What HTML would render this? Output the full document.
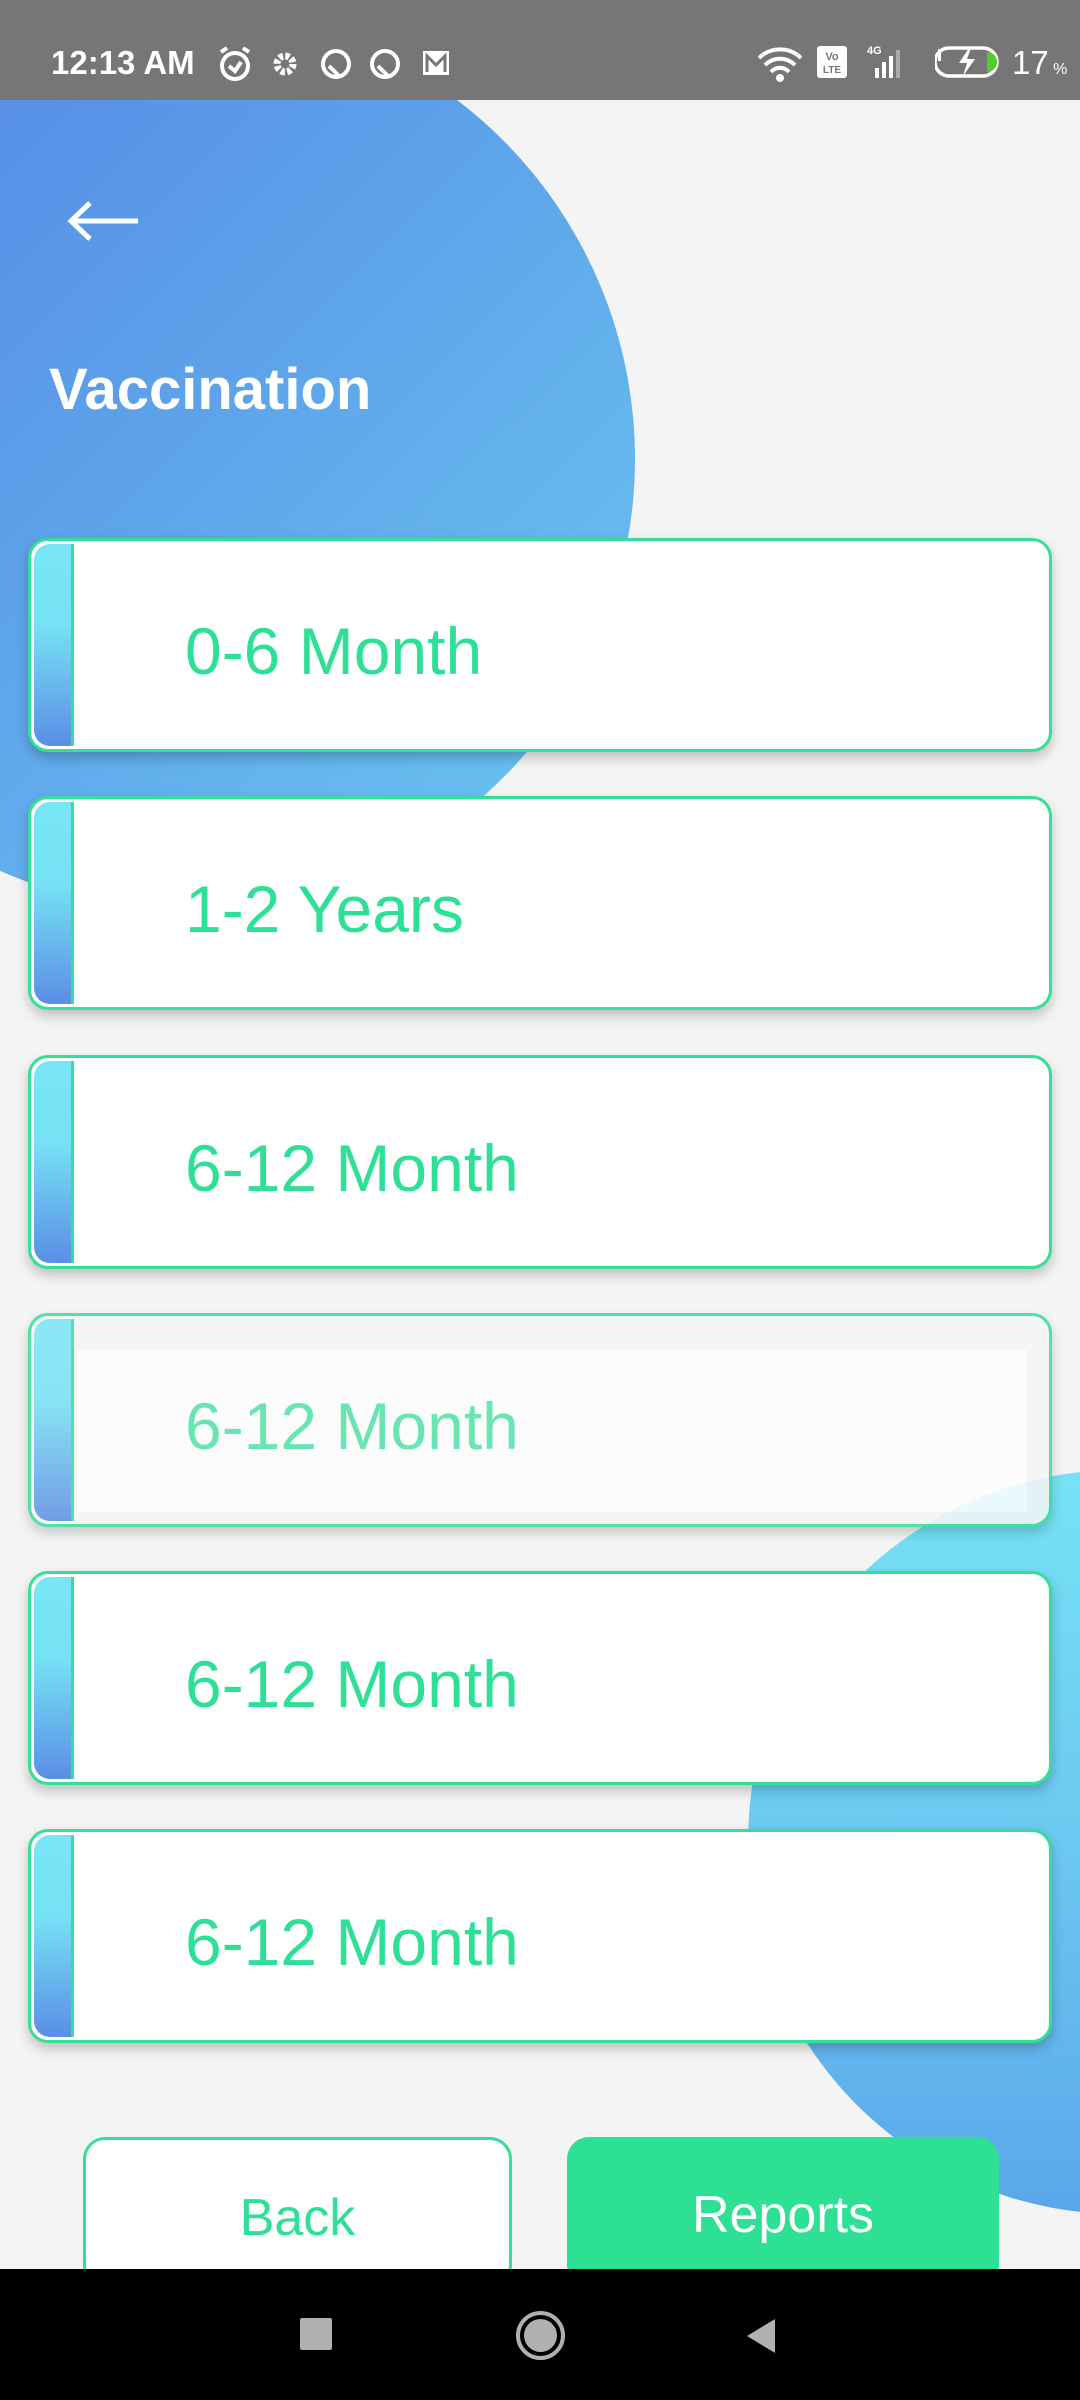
<!DOCTYPE html>
<html><head><meta charset="utf-8"><style>
*{margin:0;padding:0;box-sizing:border-box}
body{width:1080px;height:2400px;position:relative;overflow:hidden;background:#f4f4f4;font-family:"Liberation Sans",sans-serif}
.sb{position:absolute;left:0;top:0;width:1080px;height:100px;background:#767676;z-index:5;color:#fff}
.c1{position:absolute;left:-267px;top:8px;width:902px;height:902px;border-radius:50%;background:linear-gradient(135deg,#5282e4 0%,#5ea4ea 50%,#6cc8f1 100%)}
.c2{position:absolute;left:748px;top:1470px;width:744px;height:744px;border-radius:50%;background:linear-gradient(180deg,#76e3f5 0%,#6cc8f1 50%,#5aa6ea 100%)}
.card{position:absolute;left:28px;width:1024px;height:214px;border:3px solid #34df98;border-radius:20px;background:#fff;box-shadow:0 6px 12px rgba(0,0,0,.22);overflow:hidden}
.card .st{position:absolute;left:3px;top:3px;bottom:3px;width:40px;border-radius:16px 0 0 16px;background:linear-gradient(180deg,#78e6f6 0%,#76e2f5 40%,#5a8ee6 100%);border-right:3px solid #34df98}
.card .t{position:absolute;left:154px;top:6px;height:208px;line-height:208px;font-size:66px;color:#2ee096}
.ghost{opacity:.85;background:#f6f6f6}
.ghost .in{position:absolute;left:46px;top:34px;right:22px;bottom:12px;background:#fefefe}
.btn{position:absolute;top:2137px;height:150px;border-radius:22px;text-align:center;line-height:156px;font-size:52px}
.nav{position:absolute;left:0;top:2269px;width:1080px;height:131px;background:#000}
</style></head><body>
<div class="c1"></div>
<div class="c2"></div>
<div class="sb">
<div style="position:absolute;left:51px;top:44px;font-size:33px;font-weight:bold">12:13 AM</div>
<svg style="position:absolute;left:215px;top:44px" width="240" height="40" viewBox="0 0 240 40" fill="none" stroke="#fff" stroke-width="4">
<circle cx="20" cy="22" r="13"/><path d="M14 22l6 5 6-9M6 8l6-4M34 8l-6-4"/>
<circle cx="70" cy="20" r="8" stroke-width="7" stroke-dasharray="4 2.3"/>
<circle cx="121" cy="20" r="13"/><path d="M114 22l10 10"/>
<circle cx="170" cy="20" r="13"/><path d="M163 22l10 10"/>
<rect x="208" y="7" width="26" height="24" fill="#fff" stroke="none"/><path d="M212 28V12l9 9 9-9v16" stroke="#767676" stroke-width="3"/>
</svg>
<svg style="position:absolute;left:755px;top:40px" width="220" height="44" viewBox="0 0 220 44">
<path d="M4 18a30 30 0 0 1 42 0M10 25a21 21 0 0 1 30 0M16 32a12 12 0 0 1 18 0" stroke="#fff" stroke-width="4" fill="none"/><circle cx="25" cy="38" r="4" fill="#fff"/>
<rect x="62" y="6" width="30" height="32" rx="3" fill="#fff"/><text x="77" y="20" font-size="11" text-anchor="middle" fill="#767676" font-weight="bold">Vo</text><text x="77" y="33" font-size="10" text-anchor="middle" fill="#767676" font-weight="bold">LTE</text>
<text x="112" y="14" font-size="11" fill="#fff" font-weight="bold">4G</text>
<rect x="120" y="28" width="4" height="10" fill="#fff"/><rect x="127" y="22" width="4" height="16" fill="#fff"/><rect x="134" y="16" width="4" height="22" fill="#fff"/><rect x="141" y="10" width="4" height="28" fill="#aaa"/>
<rect x="183" y="9" width="3" height="12" fill="#fff"/>
</svg>
<svg style="position:absolute;left:935px;top:44px" width="70" height="36" viewBox="0 0 70 36"><path d="M14 4h34a12 12 0 0 1 0 28H14A12 12 0 0 1 14 4z" stroke="#fff" stroke-width="3.5" fill="none"/><path d="M52 8a10 10 0 0 1 0 20z" fill="#4ccf2a"/><path d="M34 4l-10 15h8l-4 13 12-17h-8l4-11z" fill="#fff"/></svg>
<div style="position:absolute;left:1012px;top:44px;font-size:33px">17<span style="font-size:16px"> %</span></div>
</div>
<svg style="position:absolute;left:66px;top:200px" width="74" height="42" viewBox="0 0 74 42"><path d="M72 21H6M24 3L5 21l19 18" stroke="#fff" stroke-width="5" fill="none"/></svg>
<div style="position:absolute;left:49px;top:356px;font-size:58px;font-weight:bold;color:#fff">Vaccination</div>

<div class="card" style="top:538px"><div class="st"></div><div class="t">0-6 Month</div></div>
<div class="card" style="top:796px"><div class="st"></div><div class="t">1-2 Years</div></div>
<div class="card" style="top:1055px"><div class="st"></div><div class="t">6-12 Month</div></div>
<div class="card ghost" style="top:1313px"><div class="in"></div><div class="st"></div><div class="t" style="color:#50e3a6">6-12 Month</div></div>
<div class="card" style="top:1571px"><div class="st"></div><div class="t">6-12 Month</div></div>
<div class="card" style="top:1829px"><div class="st"></div><div class="t">6-12 Month</div></div>

<div class="btn" style="left:83px;width:429px;background:#fff;border:3px solid #34df98;color:#2ee096">Back</div>
<div class="btn" style="left:567px;width:432px;background:#2ee094;color:#fff">Reports</div>
<div class="nav">
<div style="position:absolute;left:300px;top:49px;width:32px;height:32px;background:#b0b0b0;border-radius:2px"></div>
<div style="position:absolute;left:516px;top:42px;width:49px;height:49px;border:4px solid #b0b0b0;border-radius:50%"><div style="position:absolute;left:4px;top:4px;right:4px;bottom:4px;background:#b0b0b0;border-radius:50%"></div></div>
<svg style="position:absolute;left:744px;top:48px" width="34" height="38" viewBox="0 0 34 38"><path d="M31 2L3 19l28 17z" fill="#b0b0b0"/></svg>
</div>
</body></html>
